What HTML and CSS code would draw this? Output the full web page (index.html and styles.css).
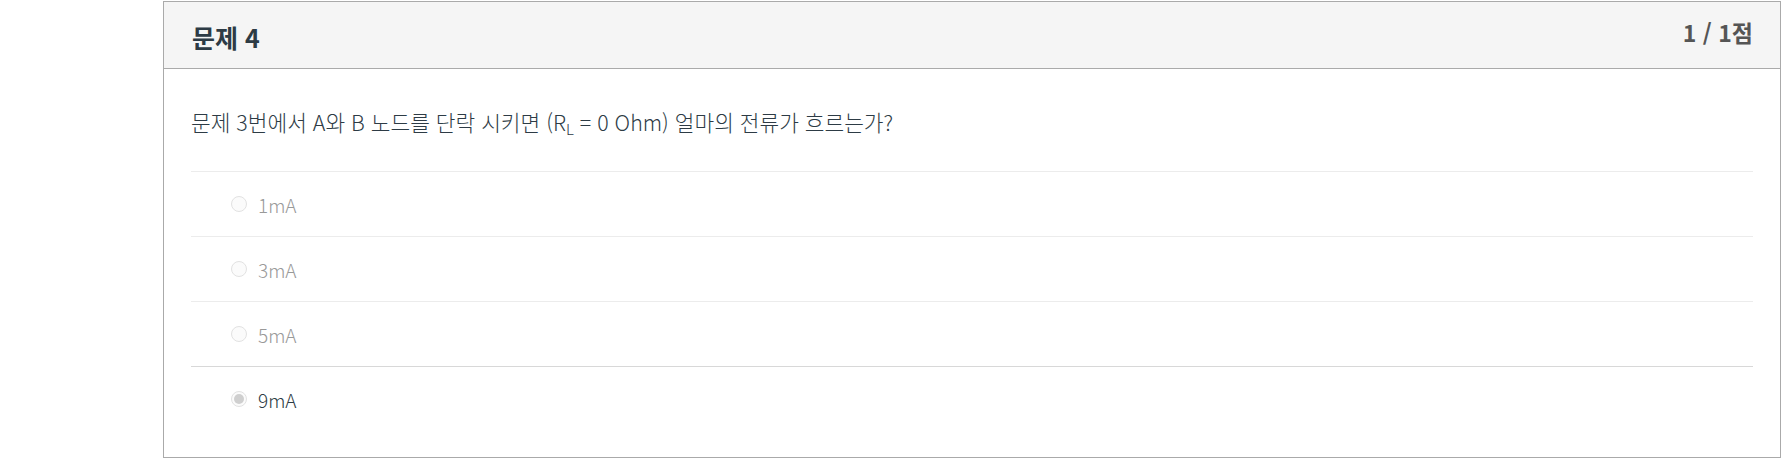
FILE: index.html
```html
<!DOCTYPE html>
<html lang="ko">
<head>
<meta charset="utf-8">
<link rel="stylesheet" href="styles.css">
</head>
<body>
<div class="page">
  <div class="card">
    <div class="card-header">
      <h2 class="title">문제 4</h2>
      <div class="points">1 / 1점</div>
    </div>
    <div class="card-body">
      <p class="question">문제 3번에서 A와 B 노드를 단락 시키면 (R<sub>L</sub> = 0 Ohm) 얼마의 전류가 흐르는가?</p>
      <div class="answers">
        <div class="answer">
          <span class="radio"></span>
          <span class="label">1mA</span>
        </div>
        <div class="answer">
          <span class="radio"></span>
          <span class="label">3mA</span>
        </div>
        <div class="answer">
          <span class="radio"></span>
          <span class="label">5mA</span>
        </div>
        <div class="answer selected">
          <span class="radio checked"></span>
          <span class="label">9mA</span>
        </div>
      </div>
    </div>
  </div>
</div>
</body>
</html>
```
FILE: styles.css
```css
* { box-sizing: border-box; }
html, body { margin: 0; padding: 0; background: #fff; }
body {
  font-family: "Noto Sans CJK KR", "Noto Sans", sans-serif;
  color: #2d3b45;
}
.page {
  padding: 1px 1px 0 163px;
}
.card {
  border: 1px solid #aaaaaa;
  background: #fff;
}
.card-header {
  background: #f5f5f5;
  border-bottom: 1px solid #aaaaaa;
  height: 67px;
  padding: 0 27px 0 28px;
  display: flex;
  justify-content: space-between;
  align-items: flex-start;
}
.title {
  margin: 0;
  padding-top: 18px;
  font-size: 25px;
  line-height: 34px;
  font-weight: 700;
  color: #2d3b45;
}
.points {
  padding-top: 14px;
  font-size: 23px;
  line-height: 32px;
  font-weight: 700;
  color: #555;
}
.card-body {
  padding: 27px 27px 26px 27px;
}
.question {
  margin: 0;
  font-size: 21.4px;
  font-weight: 300;
  line-height: 30px;
  padding: 11px 0 34px 0;
}
.question sub {
  font-size: 15px;
  line-height: 0;
  vertical-align: -4px;
}
.answers {
  display: flex;
  flex-direction: column;
}
.answer {
  border-top: 1px solid #ececec;
  height: 65px;
  display: flex;
  align-items: center;
  padding-left: 40px;
  font-size: 19px;
  font-weight: 300;
  color: #999;
}
.answer.selected {
  border-top-color: #d8d8d8;
  color: #2d3b45;
}
.radio {
  width: 16px;
  height: 16px;
  border-radius: 50%;
  border: 1px solid #e2e2e2;
  background: #fbfbfb;
  margin-right: 11px;
  display: flex;
  align-items: center;
  justify-content: center;
}
.radio.checked::after {
  content: "";
  width: 10px;
  height: 10px;
  border-radius: 50%;
  background: #cfcfcf;
}
.label {
  line-height: 30px;
  padding-top: 2px;
}
```
